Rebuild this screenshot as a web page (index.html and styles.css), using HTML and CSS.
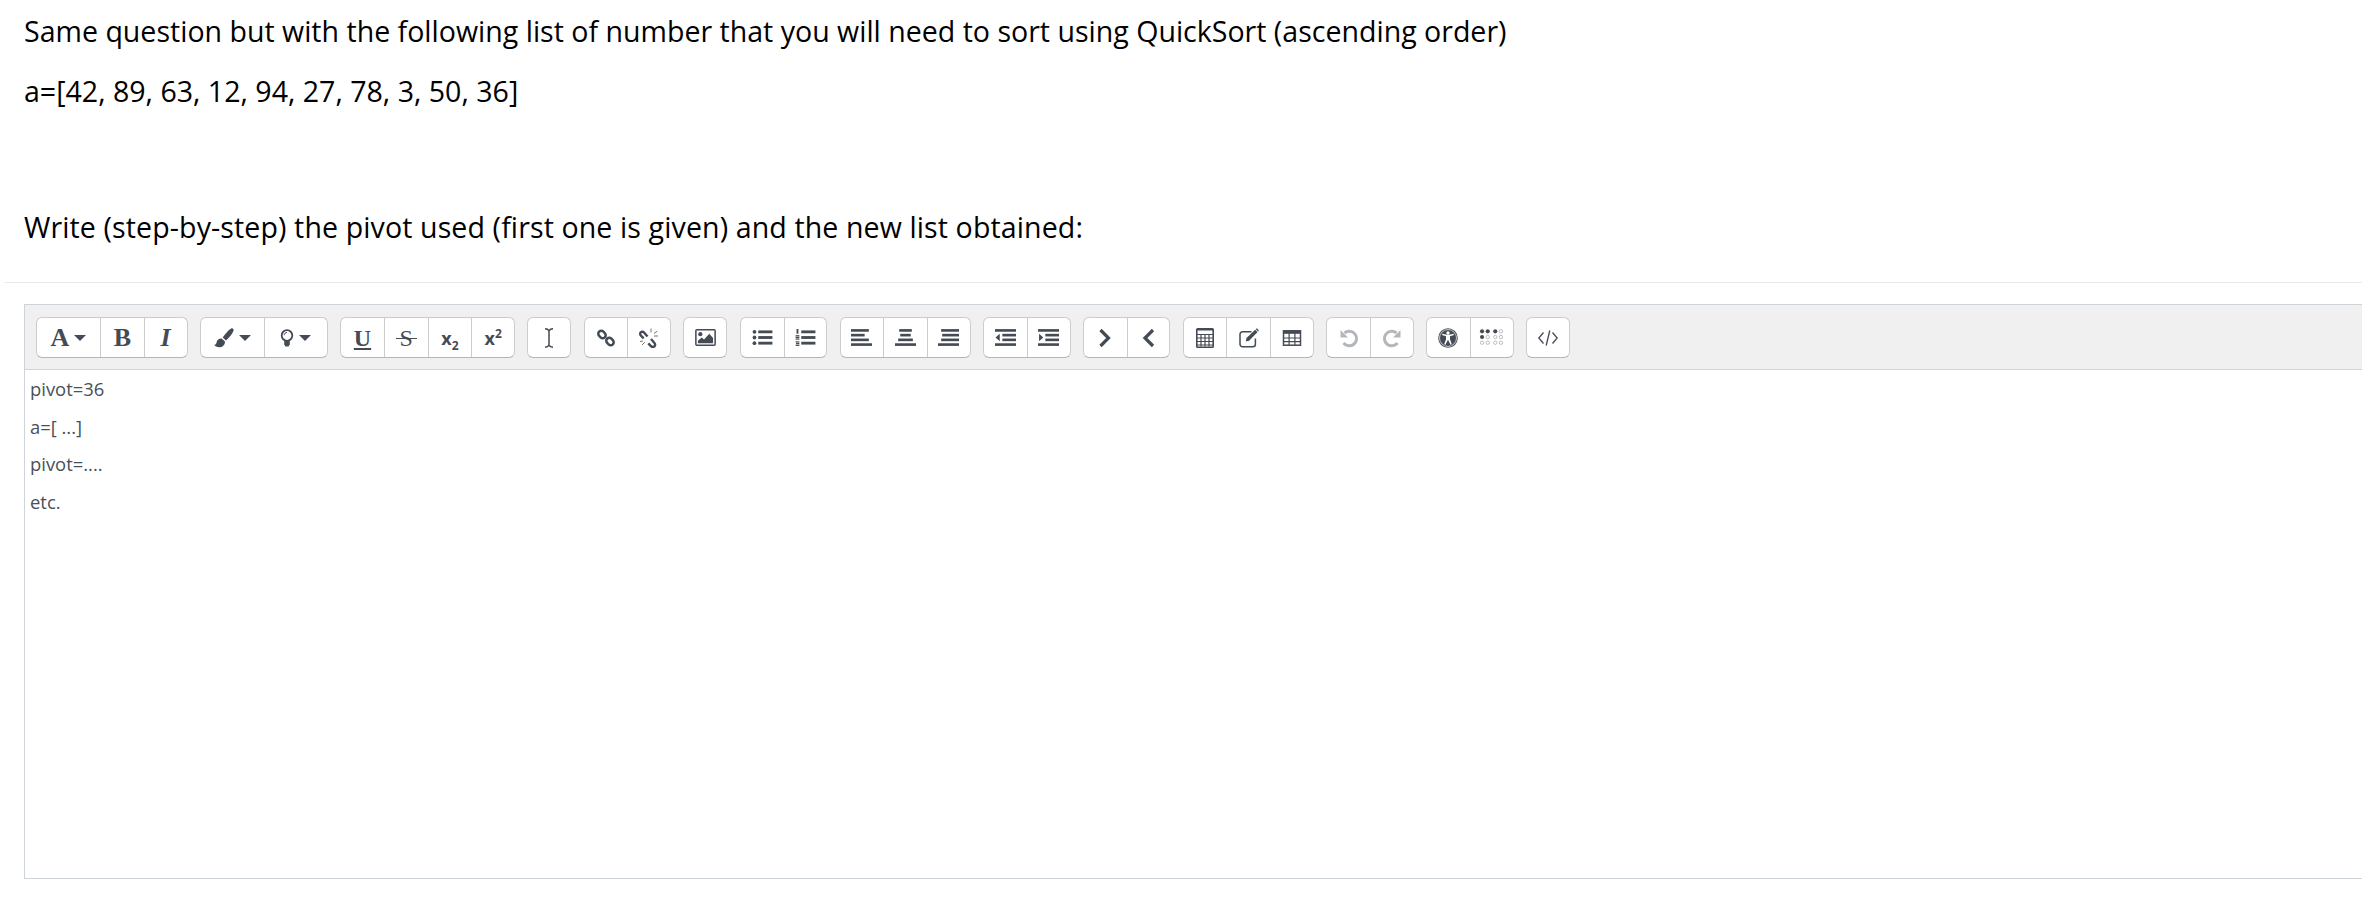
FILE: index.html
```html
<!DOCTYPE html>
<html lang="en">
<head>
<meta charset="utf-8">
<title>QuickSort question</title>
<link rel="stylesheet" href="styles.css">
</head>
<body>
<section class="question">
  <p>Same question but with the following list of number that you will need to sort using QuickSort (ascending order)</p>
  <p>a=[42, 89, 63, 12, 94, 27, 78, 3, 50, 36]</p>
  <p class="gap">Write (step-by-step) the pivot used (first one is given) and the new list obtained:</p>
</section>
<hr class="rule">
<div class="editor">
  <div class="toolbar">
    <div class="group">
      <div class="btn wide"><span class="glyph serif big">A</span><i class="caret"></i></div>
      <div class="btn"><span class="glyph serif big">B</span></div>
      <div class="btn"><span class="glyph serif big ital">I</span></div>
    </div>
    <div class="group">
      <div class="btn wide"><svg class="ico" viewBox="0 0 20 20"><path d="M17.200 .4c1.600-.6 2.800.8 2.300 2.300-1 3-4.500 7-7.500 9.800l-3.300-2.900c2.300-3.400 5.500-7.700 8.500-9.200z"/><path d="M7.600 10.500l3.400 3c0 3.600-2.600 5.800-5.800 5.800-2.200 0-4.200-.9-5.200-2.500 2.100-.1 2.200-1 2.700-2.900.5-2.200 2.500-3.600 4.900-3.400z"/></svg><i class="caret"></i></div>
      <div class="btn wide"><svg class="ico bulb" viewBox="0 0 14 18"><circle class="line" cx="7" cy="6.500" r="5.300" stroke-width="1.800"/><path class="line" d="M7 3.500c-1.500 0-2.800 1.200-2.800 2.700" stroke-width="1"/><path d="M4.200 11h5.600v4.200l-1.300 2.300h-3l-1.300-2.300z"/></svg><i class="caret"></i></div>
    </div>
    <div class="group">
      <div class="btn"><span class="glyph serif under">U</span></div>
      <div class="btn"><span class="glyph serif strike">S</span></div>
      <div class="btn"><span class="glyph sans">x<sub>2</sub></span></div>
      <div class="btn"><span class="glyph sans">x<sup>2</sup></span></div>
    </div>
    <div class="group">
      <div class="btn"><svg class="ico" viewBox="0 0 20 20"><path class="line" stroke-width="1.500" d="M6 .8c2 0 3.300.6 4 2 .7-1.400 2-2 4-2M10 2.800v14.400M6 19.200c2 0 3.300-.6 4-2 .7 1.400 2 2 4 2"/></svg></div>
    </div>
    <div class="group">
      <div class="btn"><svg class="ico" viewBox="0 0 20 20"><rect class="line" x="2" y="3.500" width="8" height="6" rx="3" stroke-width="2.500" transform="rotate(45 6 6.500)"/><rect class="line" x="10" y="10.500" width="8" height="6" rx="3" stroke-width="2.500" transform="rotate(45 14 13.500)"/></svg></div>
      <div class="btn"><svg class="ico" viewBox="0 0 20 20"><path class="line" stroke-width="2.400" d="M8.500 8.500L5 4.500C3.500 2.800 1 4 1.200 6c0 .9.500 1.500 1 2l2.500 2.300M12 11l3.200 3.700c1.700 1.800.8 4-1 4.300-1 .1-1.800-.3-2.300-.9l-2.600-2.700"/><path class="line thin" stroke-width="1" d="M12 .5v4M15 5.500l3.500-2.500M15 8h4M1 13.500l3-.5M3 17l3-3"/></svg></div>
    </div>
    <div class="group">
      <div class="btn"><svg class="ico big-ico" viewBox="0 0 22 18"><rect class="line" x=".8" y=".8" width="20.400" height="16.400" rx="1" stroke-width="1.600"/><circle cx="5.500" cy="5.500" r="2.200"/><path d="M3 15v-2.500l4-3.500 2.500 2 5.500-6 4 4.500v5.500z"/></svg></div>
    </div>
    <div class="group">
      <div class="btn"><svg class="ico big-ico" viewBox="0 0 22 18"><circle cx="2.500" cy="3" r="2"/><circle cx="2.500" cy="9" r="2"/><circle cx="2.500" cy="15" r="2"/><rect x="6.500" y="1.500" width="15" height="3"/><rect x="6.500" y="7.500" width="15" height="3"/><rect x="6.500" y="13.500" width="15" height="3"/></svg></div>
      <div class="btn"><svg class="ico big-ico" viewBox="0 0 22 18"><rect x="1.500" y="0" width="2" height="5"/><rect x=".5" y="6.500" width="4" height="1.300"/><rect x=".5" y="8.200" width="4" height="1.300"/><rect x=".5" y="10" width="4" height="1.300"/><rect x=".5" y="13" width="4" height="1.300"/><rect x="1" y="14.800" width="3.500" height="1.300"/><rect x=".5" y="16.600" width="4" height="1.300"/><rect x="6.500" y="1.500" width="15" height="3"/><rect x="6.500" y="7.500" width="15" height="3"/><rect x="6.500" y="13.500" width="15" height="3"/></svg></div>
    </div>
    <div class="group">
      <div class="btn"><svg class="ico big-ico" viewBox="0 0 20 16"><rect x="0" y="0" width="17" height="2.500"/><rect x="0" y="4.500" width="13" height="2.500"/><rect x="0" y="9" width="17" height="2.500"/><rect x="0" y="13.500" width="20" height="2.500"/></svg></div>
      <div class="btn"><svg class="ico big-ico" viewBox="0 0 20 16"><rect x="4" y="0" width="12" height="2.500"/><rect x="5" y="4.500" width="10" height="2.500"/><rect x="3" y="9" width="14" height="2.500"/><rect x="0" y="13.500" width="20" height="2.500"/></svg></div>
      <div class="btn"><svg class="ico big-ico" viewBox="0 0 20 16"><rect x="3" y="0" width="17" height="2.500"/><rect x="4" y="4.500" width="16" height="2.500"/><rect x="3" y="9" width="17" height="2.500"/><rect x="0" y="13.500" width="20" height="2.500"/></svg></div>
    </div>
    <div class="group">
      <div class="btn"><svg class="ico big-ico" viewBox="0 0 20 16"><rect width="20" height="2.500"/><rect x="7" y="4.500" width="13" height="2.500"/><rect x="7" y="9" width="13" height="2.500"/><rect y="13.500" width="20" height="2.500"/><path d="M4.500 4.500v7L.5 8z"/></svg></div>
      <div class="btn"><svg class="ico big-ico" viewBox="0 0 20 16"><rect width="20" height="2.500"/><rect x="7" y="4.500" width="13" height="2.500"/><rect x="7" y="9" width="13" height="2.500"/><rect y="13.500" width="20" height="2.500"/><path d="M1 4.500v7L5 8z"/></svg></div>
    </div>
    <div class="group">
      <div class="btn"><svg class="ico" viewBox="0 0 20 20"><path class="line" stroke-width="3.200" d="M5.500 2l8 8-8 8"/></svg></div>
      <div class="btn"><svg class="ico" viewBox="0 0 20 20"><path class="line" stroke-width="3.200" d="M14 2l-8 8 8 8"/></svg></div>
    </div>
    <div class="group">
      <div class="btn"><svg class="ico" viewBox="0 0 20 20"><rect class="line" x="1.800" y=".8" width="16.400" height="18.400" rx=".8" stroke-width="1.600"/><rect x="2" y="1" width="16" height="1.500"/><path class="line" stroke-width="1.200" d="M2 6.500h16M2 10h16M2 13.500h16M2 17h16M6 6.500v12M10 6.500v12M14 6.500v12"/></svg></div>
      <div class="btn"><svg class="ico" viewBox="0 0 20 20"><path class="line" stroke-width="1.500" d="M12.500 3.800H3.500A2.500 2.500 0 0 0 1 6.300v9.900a2.500 2.500 0 0 0 2.500 2.500h10.400a2.500 2.500 0 0 0 2.500-2.500v-5.700"/><path d="M16.200 1.800l2.400 2.200-8.500 8.700-3.300.7.700-3.300zM17 .9c.5-.5 1.100-.5 1.600 0l.8.800c.5.500.5 1.100 0 1.600l-.2.2-2.400-2.300z"/></svg></div>
      <div class="btn"><svg class="ico" viewBox="0 0 20 20"><rect class="line" x="1.500" y="2.800" width="17" height="14.400" stroke-width="1.500"/><rect x="1.500" y="2.800" width="17" height="3"/><path class="line" stroke-width="1.200" d="M1.500 10h17M1.500 13.600h17M7.100 5v12M12.900 5v12"/></svg></div>
    </div>
    <div class="group">
      <div class="btn"><svg class="ico muted" viewBox="0 0 20 20"><path class="line" stroke-width="3" d="M5.500 5A7.300 7.300 0 1 1 4.500 15"/><path d="M1.500 2v7.500H9z"/></svg></div>
      <div class="btn"><svg class="ico muted" viewBox="0 0 20 20"><path class="line" stroke-width="3" d="M14.500 5A7.300 7.300 0 1 0 15.500 15"/><path d="M18.500 2v7.500H11z"/></svg></div>
    </div>
    <div class="group">
      <div class="btn"><svg class="ico" viewBox="0 0 20 20"><circle cx="10" cy="10" r="9.800"/><circle class="ring" cx="10" cy="10" r="8.500"/><circle class="knock" cx="10" cy="5" r="1.700"/><path class="knock" d="M4 7l.5-1.200 4 1h3l4-1 .5 1.200-4 1.300v3l1.800 5-1.200.5-2.600-5-2.600 5-1.200-.5 1.800-5v-3z"/></svg></div>
      <div class="btn"><svg class="ico braille" viewBox="0 0 26 18"><circle cx="3" cy="2.500" r="2.200"/><circle cx="9" cy="2.500" r="2.200"/><circle cx="3" cy="8.500" r="2.200"/><circle class="open" cx="9" cy="8.500" r="1.800"/><circle class="open" cx="3" cy="14.500" r="1.800"/><circle class="open" cx="9" cy="14.500" r="1.800"/><circle cx="17" cy="2.500" r="2.200"/><circle class="open" cx="23" cy="2.500" r="1.800"/><circle class="open" cx="17" cy="8.500" r="1.800"/><circle class="open" cx="23" cy="8.500" r="1.800"/><circle class="open" cx="17" cy="14.500" r="1.800"/><circle class="open" cx="23" cy="14.500" r="1.800"/></svg></div>
    </div>
    <div class="group">
      <div class="btn"><svg class="ico" viewBox="0 0 20 20"><path class="line" stroke-width="1.300" d="M5.500 4.500L.8 10l4.700 5.500M14.500 4.500l4.700 5.500-4.700 5.500M11.800 2.500L8.200 17.500"/></svg></div>
    </div>
  </div>
  <div class="content">
    <p>pivot=36</p>
    <p>a=[ ...]</p>
    <p>pivot=....</p>
    <p>etc.</p>
  </div>
</div>
</body>
</html>
```
FILE: styles.css
```css
html, body {
  margin: 0;
  padding: 0;
  background: #fff;
  overflow: hidden;
}
body {
  height: 916px;
  font-family: "Open Sans", "Noto Sans", sans-serif;
  color: #000;
}
.question {
  padding: 13px 0 0 24px;
  font-size: 28.55px;
  line-height: 36px;
}
.question p {
  margin: 0 0 23.5px;
  white-space: nowrap;
}
.question p.gap {
  margin: 0;
  padding-top: 77px;
  letter-spacing: .11px;
}
.rule {
  margin: 37px 0 0 4px;
  border: 0;
  border-top: 1px solid #e9ecef;
  height: 0;
}
.editor {
  margin: 21px 0 0 24px;
  height: 573px;
  border: 1px solid #ced4da;
  border-right: 0;
  display: flex;
  flex-direction: column;
}
.toolbar {
  display: flex;
  gap: 12.3px;
  padding: 12px 0 11px 11px;
  background: #f0f0f0;
  border-bottom: 1px solid #ced4da;
  height: 41px;
}
.group {
  display: flex;
  height: 39px;
  background: #fff;
  border: 1px solid #ccc;
  border-bottom-color: #b5b5b5;
  border-radius: 6px;
}
.btn {
  flex: 0 0 43.75px;
  box-sizing: border-box;
  display: flex;
  align-items: center;
  justify-content: center;
  gap: 5px;
  color: #444b54;
  border-left: 1px solid #ccc;
}
.btn:first-child {
  border-left: 0;
  flex-basis: 42.75px;
}
.btn:last-child {
  flex-basis: 42.75px;
}
.btn:only-child {
  flex-basis: 42px;
}
.btn.wide {
  flex-basis: 63px;
}
.caret {
  display: block;
  width: 0;
  height: 0;
  border-left: 6px solid transparent;
  border-right: 6px solid transparent;
  border-top: 6.500px solid #444b54;
}
.glyph {
  line-height: 1;
  font-size: 24px;
  font-weight: 700;
}
.serif {
  font-family: "Liberation Serif", serif;
}
.sans {
  font-family: "Open Sans", sans-serif;
  font-size: 18px;
  font-weight: 700;
}
.sans sub, .sans sup {
  font-size: 12px;
  line-height: 0;
}
.big {
  font-size: 26px;
}
.ital {
  font-style: italic;
}
.under {
  text-decoration: underline;
  text-underline-offset: 2px;
}
.strike {
  position: relative;
  font-weight: 400;
}
.strike::after {
  content: "";
  position: absolute;
  left: -4px;
  right: -4px;
  top: 50%;
  border-top: 1.5px solid #444b54;
}
.ico {
  width: 20px;
  height: 20px;
  fill: #444b54;
  stroke: none;
  display: block;
}
.ico .line {
  fill: none;
  stroke: #444b54;
}
.ico .line.thin {
  stroke: #777;
}
.ico .knock {
  fill: #fff;
}
.ico .ring {
  fill: none;
  stroke: #fff;
  stroke-width: .7;
}
.bulb {
  width: 14px;
  height: 18px;
}
.big-ico {
  width: 21px;
  height: 17px;
}
.muted {
  fill: #b3b7bb;
}
.muted .line {
  stroke: #b3b7bb;
}
.braille {
  width: 25px;
  height: 17px;
}
.braille .open {
  fill: none;
  stroke: #aaa;
  stroke-width: .8;
}
.content {
  flex: 1;
  padding: 6px 5px;
  font-size: 18.4px;
  line-height: 25.5px;
  color: #495057;
}
.content p {
  margin: 0 0 12px;
}
```
